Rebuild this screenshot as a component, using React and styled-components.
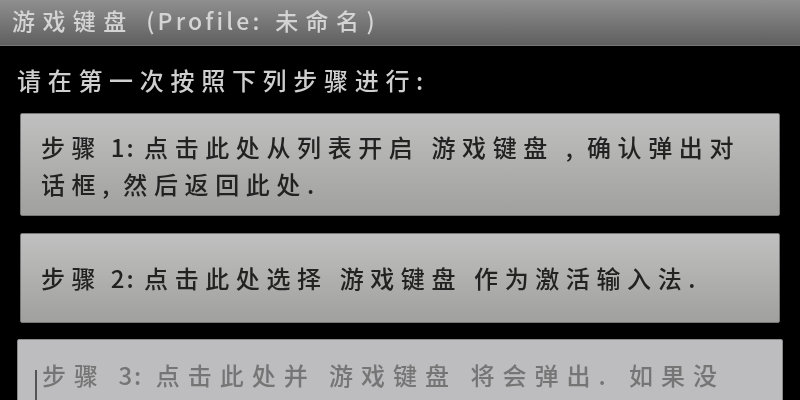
import React from 'react';
import styled, { createGlobalStyle } from 'styled-components';

const GlobalStyle = createGlobalStyle`
    html, body {
        margin: 0;
        padding: 0;
        background: #000;
    }
`;

const Screen = styled.div`
    width: 800px;
    height: 400px;
    overflow: hidden;
    background: #000;
    font-family: "Noto Sans CJK SC", "Liberation Sans", sans-serif;
    font-weight: 500;
`;

const TitleBar = styled.div`
    height: 46px;
    box-sizing: border-box;
    padding: 0 0 5px 12px;
    display: flex;
    align-items: center;
    background: linear-gradient(#8f8f8f, #5f5f5f);
    border-bottom: 1px solid #777;
    color: #d4d4d4;
    font-size: 23px;
    letter-spacing: 7.4px;
    white-space: pre;
    filter: blur(0.5px);
`;

const Latin = styled.span`
    letter-spacing: ${props => props.$spacing || 2}px;
`;

const StepLabel = styled.span`
    word-spacing: ${props => props.$gap}px;
`;

const Intro = styled.div`
    height: 67px;
    box-sizing: border-box;
    padding: 17px 0 0 17px;
    color: #cfcfcf;
    font-size: 24px;
    line-height: 34px;
    letter-spacing: 6.7px;
    white-space: nowrap;
    filter: blur(0.4px);
`;

const StepList = styled.div`
    display: flex;
    flex-direction: column;
    align-items: center;
`;

const StepCard = styled.div`
    position: relative;
    box-sizing: border-box;
    width: ${props => (props.$active ? '766px' : '760px')};
    height: ${props => props.$height}px;
    margin-bottom: ${props => props.$gap}px;
    padding: ${props => props.$top}px 0 0 ${props => (props.$active ? '24px' : '20px')};
    flex-shrink: 0;
    background: ${props => (props.$active
        ? '#bdbdbf'
        : 'linear-gradient(#c0c0c0, #a0a09e)')};
    border: 1px solid ${props => (props.$active ? '#8a8a8a' : '#777')};
    border-radius: 2px;
    color: ${props => (props.$active ? '#757575' : '#222')};
`;

const StepLine = styled.div`
    font-size: 24px;
    line-height: 37px;
    letter-spacing: ${props => props.$spacing || 6.6}px;
    white-space: pre;
    filter: blur(0.4px);
`;

const Caret = styled.div`
    position: absolute;
    left: 17px;
    top: 30px;
    width: 2px;
    height: 40px;
    background: #555;
`;

const App = () => {
    return (
        <Screen>
            <GlobalStyle />
            <TitleBar>游戏键盘 <Latin $spacing={3.2}>(Profile:</Latin> 未命名<Latin>)</Latin></TitleBar>
            <Intro>请在第一次按照下列步骤进行:</Intro>
            <StepList>
                <StepCard $height={103} $gap={17} $top={14}>
                    <StepLine><StepLabel $gap={-3.5}>步骤 <Latin>1:</Latin> </StepLabel>点击此处从列表开启 游戏键盘 <Latin>,</Latin> 确认弹出对</StepLine>
                    <StepLine>话框<Latin>,</Latin> 然后返回此处<Latin>.</Latin></StepLine>
                </StepCard>
                <StepCard $height={90} $gap={16} $top={25}>
                    <StepLine><StepLabel $gap={-3.5}>步骤 <Latin>2:</Latin> </StepLabel>点击此处选择 游戏键盘 作为激活输入法<Latin>.</Latin></StepLine>
                </StepCard>
                <StepCard $active $height={100} $gap={0} $top={16}>
                    <Caret />
                    <StepLine $spacing={8}><StepLabel $gap={-1}>步骤 <Latin>3:</Latin> </StepLabel>点击此处并 游戏键盘 将会弹出<Latin $spacing={10}>.</Latin> 如果没</StepLine>
                </StepCard>
            </StepList>
        </Screen>
    );
};

export default App;
